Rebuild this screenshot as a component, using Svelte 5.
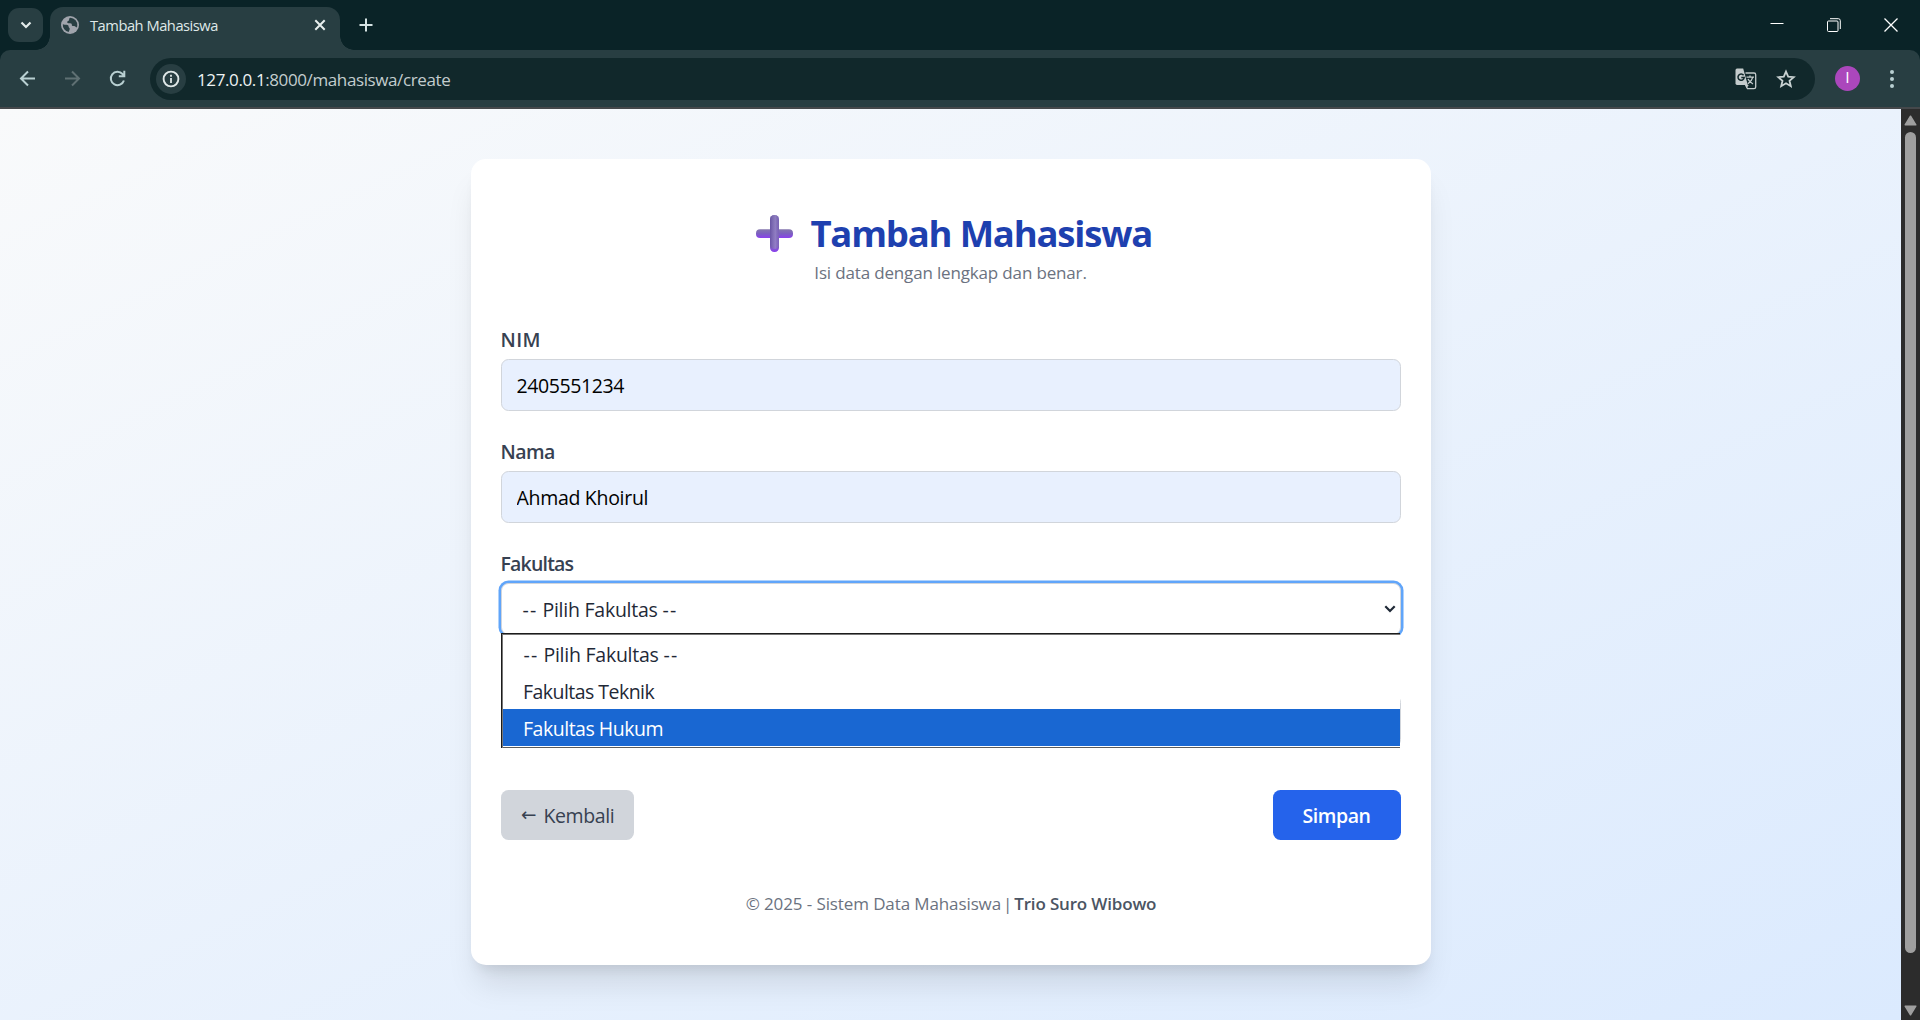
<script>
  const fields = [
    { label: 'NIM', value: '2405551234', cls: 'nim' },
    { label: 'Nama', value: 'Ahmad Khoirul', cls: 'nama' }
  ];
  const options = ['Fakultas Teknik', 'Fakultas Hukum'];
  let active = $state(1);
</script>

{#snippet placeholder()}<span class="dash">--</span> Pilih Fakultas <span class="dash">--</span>{/snippet}

<div class="window">
  <header class="strip">
    <button class="search" aria-label="Cari tab">
      <svg width="14" height="10" viewBox="0 0 14 10"><path d="M2.500 2.500 7 7l4.500-4.500" fill="none" stroke="#e3eceb" stroke-width="2.200" /></svg>
    </button>
    <div class="tab">
      <svg class="favicon" width="18" height="18" viewBox="0 0 18 18">
        <circle cx="9" cy="9" r="9" fill="#a0a4ac" />
        <path d="M9.200 1.700c-1.300.6-1 1.600-1.100 2.300-.1 1-1.700.8-1.900 1.900-.1 1.200 1 1.200 2 1.300 1.200.1 2.700.1 2.600 1.300-.1 1 .5 1.500 1.700 1.500 1.100 0 1.700.3 2.300 1.100.7.8 1.300-.1 1.500-1.100A7.300 7.300 0 0 0 9.200 1.700ZM1.800 8.200c1.500.5 2.300.6 3.600.6 1.500.1 2.200.7 2.200 1.700 0 1.300 1.100 1 1.100 2.200 0 1.500-.8 2-1 3.200A7.200 7.200 0 0 1 1.800 8.200Z" fill="#283e42" />
      </svg>
      <span class="tab-title">Tambah Mahasiswa</span>
      <svg class="tab-close" width="12" height="12" viewBox="0 0 12 12"><path d="m1.300 1.300 9.400 9.400m0-9.400-9.400 9.400" stroke="#e8efee" stroke-width="2" /></svg>
    </div>
    <svg class="new-tab" width="14" height="14" viewBox="0 0 14 14"><path d="M7 .5v13M.5 7h13" stroke="#d5e3e3" stroke-width="2" /></svg>
    <div class="controls">
      <svg width="14" height="14" viewBox="0 0 14 14"><path d="M.5 5.500h13" stroke="#fff" /></svg>
      <svg width="14" height="14" viewBox="0 0 14 14" fill="none" stroke="#fff"><rect x=".5" y="3" width="10.500" height="10.500" rx="1" /><path d="M3 .7h8.300A2 2 0 0 1 13.300 2.700V11" /></svg>
      <svg width="14" height="14" viewBox="0 0 14 14"><path d="m.5.5 13 13m0-13-13 13" stroke="#fff" stroke-width="1.300" /></svg>
    </div>
  </header>

  <div class="toolbar-wrap">
    <nav class="toolbar">
      <svg class="nav" width="17" height="17" viewBox="0 0 17 17" fill="none" stroke="#b9d0d2" stroke-width="2"><path d="M16 8.500H2.500M9 1.500l-7 7 7 7" /></svg>
      <svg class="nav" width="17" height="17" viewBox="0 0 17 17" fill="none" stroke="#5f7073" stroke-width="2"><path d="M1 8.500h13.500M8 1.500l7 7-7 7" /></svg>
      <svg class="nav" width="17" height="17" viewBox="0 0 17 17" fill="none" stroke="#b9d0d2" stroke-width="2"><path d="M14.900 10.500A6.700 6.700 0 1 1 13.500 4L15 5.500M15.300.8v5.500H9.800" /></svg>
      <div class="omnibox">
        <span class="info">
          <svg width="18" height="18" viewBox="0 0 18 18"><circle cx="9" cy="9" r="7.400" fill="none" stroke="#dfe7e7" stroke-width="1.900" /><path d="M9 8v5M9 4.800v2" stroke="#dfe7e7" stroke-width="1.800" /></svg>
        </span>
        <span class="url"><b>127.0.0.1</b>:8000/mahasiswa/create</span>
        <svg class="translate" width="22" height="22" viewBox="0 0 22 22">
          <path d="M10.500 5H19a1.700 1.700 0 0 1 1.700 1.700V19A1.700 1.700 0 0 1 19 20.700h-6.500L10.500 17" fill="none" stroke="#c4cbcc" stroke-width="1.300" />
          <path d="M2 .5h6.200L12.800 17H2A1.600 1.600 0 0 1 .5 15.500V2A1.600 1.600 0 0 1 2 .5Z" fill="#c4cbcc" />
          <path d="M10.500 17h3.200l-2 3.300Z" fill="#c4cbcc" />
          <path d="M8.600 7.300a3.100 3.100 0 1 0 .6 2.200H6.300" fill="none" stroke="#11282b" stroke-width="1.500" />
          <path d="M11.500 9.200H19M15 7.500v1.700m2.700.2c-.6 2.600-2.700 4.900-4.700 6.400m0-4.800c1 2 3 4 5 5" fill="none" stroke="#c4cbcc" stroke-width="1.300" />
        </svg>
        <svg class="star" width="20" height="20" viewBox="0 0 20 20"><path d="m10 2.600 2.200 5.100 5.500.5-4.200 3.600 1.300 5.400L10 14.300l-4.800 2.900 1.300-5.400L2.300 8.200l5.500-.5Z" fill="none" stroke="#c9d2d2" stroke-width="1.800" /></svg>
      </div>
      <span class="avatar">I</span>
      <svg class="dots" width="4" height="18" viewBox="0 0 4 18" fill="#b9d0d2"><circle cx="2" cy="2" r="2" /><circle cx="2" cy="9" r="2" /><circle cx="2" cy="16" r="2" /></svg>
    </nav>
  </div>

  <div class="viewport">
    <main class="page">
      <section class="card">
        <div class="heading">
          <svg width="37" height="37" viewBox="0 0 37 37">
            <defs>
              <linearGradient id="bar-v" x1="0" y1="0" x2="0" y2="1"><stop offset="0" stop-color="#7564ad" /><stop offset=".85" stop-color="#8064bd" /><stop offset="1" stop-color="#8a3df0" /></linearGradient>
              <linearGradient id="bar-h" x1="0" y1="0" x2="0" y2="1"><stop offset="0" stop-color="#8577ae" /><stop offset=".5" stop-color="#7c5fc0" /><stop offset="1" stop-color="#8b41ee" /></linearGradient>
              <linearGradient id="shine" x1="0" x2="1"><stop offset="0" stop-color="#5d4a99" stop-opacity=".6" /><stop offset=".6" stop-color="#a597cf" stop-opacity=".5" /><stop offset="1" stop-color="#7a60bd" stop-opacity=".2" /></linearGradient>
            </defs>
            <rect y="14.300" width="37" height="8.700" rx="4" fill="url(#bar-h)" />
            <rect x="14" width="9" height="37" rx="4.200" fill="url(#bar-v)" />
            <rect x="14" width="9" height="34" rx="4.200" fill="url(#shine)" />
          </svg>
          <h1>Tambah Mahasiswa</h1>
        </div>
        <p class="sub">Isi data dengan lengkap dan benar.</p>

        <form>
          {#each fields as f}
            <div class="field">
              <label class={f.cls} for={f.cls}>{f.label}</label>
              <input id={f.cls} class={f.cls} value={f.value} autocomplete="off" />
            </div>
          {/each}
          <div class="field">
            <span class="label fak">Fakultas</span>
            <div class="select focused">
              <span class="current">{@render placeholder()}</span>
              <svg width="12" height="8" viewBox="0 0 12 8"><path d="M1.300 1.300 6 6l4.700-4.700" fill="none" stroke="#1f2937" stroke-width="2.200" /></svg>
              <ul class="menu">
                <li class="pilih">{@render placeholder()}</li>
                {#each options as o, i}
                  <li class:active={i === active}>{o}</li>
                {/each}
              </ul>
            </div>
          </div>
          <div class="field">
            <span class="label"></span>
            <div class="select"></div>
          </div>
          <div class="actions">
            <button type="button" class="back"><span class="arrow">←</span><span>Kembali</span></button>
            <button type="button" class="save">Simpan</button>
          </div>
        </form>

        <footer><span>© 2025 - Sistem Data Mahasiswa</span><span>|</span><strong>Trio Suro Wibowo</strong></footer>
      </section>
    </main>
    <aside class="scrollbar">
      <svg width="13" height="11" viewBox="0 0 13 11"><path d="M6.500 1.200 11.800 9.800H1.200Z" fill="#9f9f9f" stroke="#9f9f9f" stroke-width="1.500" stroke-linejoin="round" /></svg>
      <div class="thumb"></div>
      <svg width="13" height="11" viewBox="0 0 13 11"><path d="M6.500 9.800 11.800 1.200H1.200Z" fill="#9f9f9f" stroke="#9f9f9f" stroke-width="1.500" stroke-linejoin="round" /></svg>
    </aside>
  </div>
</div>

<style>
  :global(body) { margin: 0; overflow: hidden; }
  .window, .window * { box-sizing: border-box; }
  .window {
    width: 1920px; height: 1020px; display: flex; flex-direction: column;
    font-family: "Open Sans", "Noto Sans", sans-serif; color: #1f2937; overflow: hidden;
  }
  svg { display: block; flex: none; }
  button { font: inherit; border: 0; padding: 0; }

  .strip { height: 50px; flex: none; background: #0a2327; display: flex; align-items: flex-start; }
  .search {
    width: 35px; height: 34px; margin: 8px 7px 0 8px; border-radius: 11px; background: #283e42;
    display: flex; align-items: center; justify-content: center;
  }
  .tab {
    position: relative; width: 290px; height: 43px; margin-top: 7px; padding: 0 14px 7px 11px;
    display: flex; align-items: center; background: #283e42; border-radius: 13px 13px 0 0;
  }
  .tab::before, .tab::after { content: ""; position: absolute; bottom: 0; width: 14px; height: 14px; }
  .tab::before { left: -14px; background: radial-gradient(circle at 0 0, transparent 13.500px, #283e42 14px); }
  .tab::after { right: -14px; background: radial-gradient(circle at 100% 0, transparent 13.500px, #283e42 14px); }
  .tab-title { margin-left: 11px; font-size: 14.700px; line-height: 20px; letter-spacing: -0.480px; color: #dfe8e8; white-space: nowrap; }
  .tab-close { margin-left: auto; }
  .new-tab { margin: 18px 0 0 19px; }
  .controls { margin: 18px 22px 0 auto; display: flex; gap: 43px; }

  .toolbar-wrap { flex: none; height: 59px; background: #0a2327; }
  .toolbar {
    height: 59px; border-bottom: 2px solid #45484b; background: #283e42; border-radius: 10px 10px 0 0;
    display: flex; align-items: center; padding-left: 19px;
  }
  .nav { margin-right: 28px; }
  .omnibox {
    width: 1665px; height: 42px; margin: 1px 0 0 -4px; padding: 0 19px 0 6px; border-radius: 21px; background: #11282b;
    display: flex; align-items: center;
  }
  .info { width: 30px; height: 30px; border-radius: 50%; background: #283e42; display: flex; align-items: center; justify-content: center; }
  .url { margin-left: 11px; font-size: 17px; letter-spacing: -0.390px; color: #c3cdce; white-space: nowrap; }
  .url b { font-weight: 400; color: #eef3f3; }
  .translate { margin-left: auto; }
  .star { margin-left: 19px; }
  .avatar {
    width: 25px; height: 25px; margin-left: 20px; border-radius: 50%; background: #ab47bc; color: #fff;
    font: 14px/25px Roboto, sans-serif; text-align: center;
  }
  .dots { margin-left: 30.300px; }

  .viewport { flex: 1; display: flex; min-height: 0; }
  .page {
    flex: 1; padding-top: 50px; display: flex; justify-content: center; align-items: flex-start;
    background: linear-gradient(to bottom right, #f9fafb, #dbeafe);
  }
  .card {
    width: 960px; height: 806px; padding: 52px 30px 0; background: #fff; border-radius: 15px;
    box-shadow: 0 25px 31px -6px rgba(0, 0, 0, 0.1), 0 10px 12.500px -7.500px rgba(0, 0, 0, 0.1);
  }
  .heading { display: flex; justify-content: center; align-items: center; gap: 17.500px; height: 45px; padding-left: 7px; }
  h1 { margin: 0; font-size: 36.500px; line-height: 45px; font-weight: 700; letter-spacing: -1.200px; color: #1e40af; white-space: nowrap; }
  .sub { margin: 4px 0 42px; font-size: 17px; line-height: 25px; letter-spacing: -0.160px; text-align: center; color: #6b7280; }
  .field { margin-bottom: 28px; }
  label, .label { display: block; height: 25px; margin-bottom: 7px; font-size: 19.500px; line-height: 25px; font-weight: 600; color: #374151; }
  label.nim { letter-spacing: 0.400px; }
  label.nama { letter-spacing: -0.600px; }
  .label.fak { letter-spacing: -0.800px; }
  input, .select {
    display: block; width: 900px; height: 52px; border: 1px solid #d1d5db; border-radius: 7.500px; outline: 0;
    font: 19.500px/26px "Open Sans", sans-serif;
  }
  input { padding: 0 15px; background: #e8f0fe; color: #000; }
  input.nim { letter-spacing: -0.400px; }
  input.nama { letter-spacing: -0.300px; }
  .select { position: relative; display: flex; align-items: center; justify-content: space-between; padding: 0 4px 0 21px; background: #fff; }
  .focused { box-shadow: 0 0 0 2.500px #60a5fa; z-index: 1; }
  .current { padding-top: 2px; letter-spacing: -0.250px; }
  .dash { letter-spacing: 1.300px; }
  .menu {
    position: absolute; left: -1px; top: 49px; width: 899px; height: 115px; margin: 0; padding: 1px 0 0; list-style: none;
    background: #fff; border: solid #1c1c1c; border-width: 1px 0 0 1px; box-shadow: inset 1px 1px #777, inset 0 -1px #5a5a5a;
  }
  .menu li { height: 37px; margin-left: 1px; padding: 1px 0 0 20.500px; line-height: 38px; letter-spacing: -0.540px; }
  .menu li.pilih { letter-spacing: -0.250px; padding-left: 21px; }
  .menu li.pilih .dash { letter-spacing: 1.300px; }
  .menu li.active { background: #1967d2; color: #fff; letter-spacing: -0.480px; }
  .actions { display: flex; justify-content: space-between; margin-top: 43px; }
  .actions button { height: 50px; border-radius: 7.500px; font-size: 19.500px; }
  .back { width: 133px; display: flex; align-items: center; gap: 7px; padding-left: 20px; background: #d1d5db; color: #374151; letter-spacing: -0.400px; }
  .arrow { width: 16px; font: 18.500px/26px "DejaVu Sans", sans-serif; }
  .save { width: 128px; background: #2563eb; color: #fff; font-weight: 600; letter-spacing: -0.400px; }
  footer { margin-top: 51px; display: flex; justify-content: center; gap: 2px; padding-left: 1px; font-size: 17px; line-height: 25px; color: #6b7280; letter-spacing: -0.110px; }
  footer strong { font-weight: 600; color: #4b5563; letter-spacing: -0.170px; }

  .scrollbar { width: 19px; background: #2c2c2c; display: flex; flex-direction: column; align-items: center; padding: 6px 0 4px; }
  .thumb { width: 11px; height: 821px; margin: 6px 0 auto; border-radius: 6px; background: #9f9f9f; }
</style>
